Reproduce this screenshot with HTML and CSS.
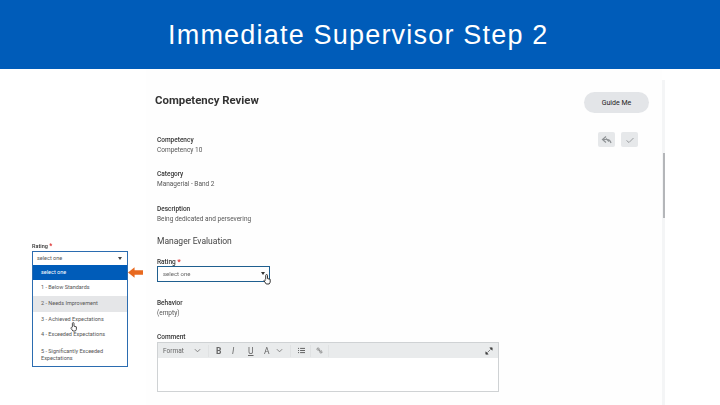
FILE: index.html
```html
<!DOCTYPE html>
<html lang="en">
<head>
    <meta charset="UTF-8">
    <title>Immediate Supervisor Step 2</title>
    <link rel="stylesheet" href="styles.css">
</head>
<body>
    <header class="banner">
        <h1>Immediate Supervisor Step 2</h1>
    </header>
    <main class="slide">
        <div class="crop">
            <div class="crop-label">Rating <span class="req">*</span></div>
            <div class="crop-box">
                <div class="crop-select">select one <span class="caret"></span></div>
                <div class="opt opt-active">select one</div>
                <div class="opt">1 - Below Standards</div>
                <div class="opt opt-hover">2 - Needs Improvement</div>
                <div class="opt">3 - Achieved Expectations</div>
                <div class="opt">4 - Exceeded Expectations</div>
                <div class="opt opt-wrap">5 - Significantly Exceeded Expectations</div>
                <svg class="hand" viewBox="0 0 10 12"><path d="M3 6V1.5a1 1 0 0 1 2 0V5l3 .8V9l-1.2 2H3.6L1.2 7.6C1 6.6 2 6 3 7" fill="#fff" stroke="#222" stroke-width="1"/></svg>
            </div>
        </div>
        <svg class="arrow" viewBox="0 0 16 11"><path d="M0 5.500 7 0V3.200H16V7.800H7V11Z" fill="#e8691f"/></svg>
        <section class="panel">
            <div class="panel-head">
                <h2>Competency Review</h2>
                <button class="guide">Guide Me</button>
            </div>
            <div class="actions">
                <span class="icon-btn"><svg viewBox="0 0 12 12"><path d="M5 2.500 1.500 5.500 5 8.500M1.500 5.500H6.500c2 0 3 1.500 3.500 3.500M5 4.500 8 7.500" fill="none" stroke="#8f9295" stroke-width="1.200"/></svg></span>
                <span class="icon-btn"><svg viewBox="0 0 12 12"><path d="M2.500 6.500 5 8.500l4.500-4.500" fill="none" stroke="#9a9da0" stroke-width="1"/></svg></span>
            </div>
            <div class="form">
                <div class="field field-first">
                    <div class="label">Competency</div>
                    <div class="value">Competency 10</div>
                </div>
                <div class="field">
                    <div class="label">Category</div>
                    <div class="value">Managerial - Band 2</div>
                </div>
                <div class="field">
                    <div class="label">Description</div>
                    <div class="value">Being dedicated and persevering</div>
                </div>
                <h3>Manager Evaluation</h3>
                <div class="label label-tight">Rating <span class="req">*</span></div>
                <div class="select">
                    select one
                    <span class="caret caret-dark"></span>
                    <svg class="pointer" viewBox="0 0 10 12"><path d="M3 6V1.500a1 1 0 0 1 2 0V5l3 .8V9l-1.200 2H3.600L1.200 7.600C1 6.600 2 6 3 7" fill="#fff" stroke="#222" stroke-width="1"/></svg>
                </div>
                <div class="field behavior">
                    <div class="label">Behavior</div>
                    <div class="value">(empty)</div>
                </div>
                <div class="label label-tight">Comment</div>
                <div class="editor">
                    <div class="toolbar">
                        <span class="format">Format</span>
                        <svg class="chev" viewBox="0 0 8 5"><path d="M1 1 4 4 7 1" fill="none" stroke="#777"/></svg>
                        <span class="sep"></span>
                        <b class="tool">B</b>
                        <i class="tool">I</i>
                        <u class="tool">U</u>
                        <span class="tool tool-a">A</span>
                        <svg class="chev" viewBox="0 0 8 5"><path d="M1 1 4 4 7 1" fill="none" stroke="#777"/></svg>
                        <span class="sep"></span>
                        <svg class="tool-svg" viewBox="0 0 10 10"><path d="M0 2H1.500M3 2H10M0 5H1.500M3 5H10M0 8H1.500M3 8H10" stroke="#555" stroke-width="1.300"/></svg>
                        <span class="sep sep-narrow"></span>
                        <svg class="tool-svg" viewBox="0 0 10 10"><path d="M1 3 3 1 5 3 3 5ZM5 7 7 5 9 7 7 9ZM3.500 3.500 6.500 6.500" fill="none" stroke="#666"/></svg>
                        <span class="sep sep-narrow"></span>
                        <svg class="expand" viewBox="0 0 10 10"><path d="M1 9V6L4 9ZM9 1V4L6 1ZM3 7 7 3" fill="#444" stroke="#444" stroke-width=".8"/></svg>
                    </div>
                    <div class="editor-body"></div>
                </div>
            </div>
        </section>
        <div class="scrollbar"><span class="thumb"></span></div>
    </main>
</body>
</html>
```

FILE: styles.css
```css
* {
    box-sizing: border-box;
}

body {
    margin: 0;
    width: 720px;
    height: 405px;
    overflow: hidden;
    background-color: #fff;
    font-family: Roboto, "Liberation Sans", sans-serif;
}

.banner {
    height: 69px;
    background-color: #005cb9;
    display: flex;
    align-items: center;
    padding: 1px 0 0 168px;
}

.banner h1 {
    margin: 0;
    color: #fff;
    font-family: "Liberation Sans", Arial, sans-serif;
    font-size: 27px;
    font-weight: normal;
    letter-spacing: 1.2px;
    white-space: nowrap;
}

.slide {
    display: flex;
    align-items: flex-start;
    height: 336px;
    overflow: hidden;
    padding-left: 32px;
}

/* zoomed copy of the dropdown on the left */
.crop {
    width: 96px;
    margin-top: 174px;
    font-size: 5.500px;
    color: #555;
    filter: blur(0.35px);
}

.crop-label {
    height: 8px;
    line-height: 6px;
    font-weight: 500;
    color: #333;
}

.req {
    color: #d33;
    font-weight: bold;
    font-size: 1.2em;
}

.crop-box {
    position: relative;
    border: 1px solid #2b6cb0;
    background-color: #fff;
    height: 116px;
}

.crop-select {
    height: 13px;
    line-height: 12px;
    padding-left: 4px;
    position: relative;
}

.caret {
    position: absolute;
    right: 5px;
    top: 5px;
    border-left: 2.500px solid transparent;
    border-right: 2.500px solid transparent;
    border-top: 3px solid #444;
}

.opt {
    height: 15.800px;
    line-height: 15.800px;
    padding-left: 8px;
    white-space: nowrap;
}

.opt-active {
    background-color: #005cb9;
    color: #fff;
    height: 15px;
    line-height: 15px;
}

.opt-hover {
    background-color: #e5e6e8;
}

.opt-wrap {
    height: 24px;
    line-height: 7px;
    padding: 5px 4px 0 8px;
    white-space: normal;
}

.hand {
    position: absolute;
    left: 37px;
    top: 70px;
    width: 8px;
    height: 10px;
}

.arrow {
    width: 15px;
    height: 11px;
    margin-top: 198px;
    flex: none;
}

.panel {
    width: 516px;
    height: 336px;
    margin-left: 3px;
    padding: 23px 13px 0 9px;
    flex: none;
    background-color: #fefefe;
    color: #333;
}

.panel-head {
    display: flex;
    align-items: center;
    justify-content: space-between;
    height: 21px;
}

.panel-head h2 {
    margin: -6px 0 0;
    font-size: 11.400px;
    font-weight: bold;
    color: #333;
    filter: blur(0.3px);
}

.guide {
    width: 65px;
    height: 21px;
    border: none;
    border-radius: 11px;
    background-color: #e3e5e8;
    font-family: inherit;
    font-size: 7px;
    font-weight: 400;
    color: #222;
    padding: 0;
}

.actions {
    display: flex;
    justify-content: flex-end;
    gap: 6px;
    height: 15px;
    margin-top: 19px;
    padding-right: 11px;
}

.icon-btn {
    width: 17px;
    height: 15px;
    background-color: #e6e8ea;
    border-radius: 2px;
    display: flex;
    align-items: center;
    justify-content: center;
}

.icon-btn svg {
    width: 12px;
    height: 12px;
}

.form {
    margin-left: 2px;
    margin-top: -11px;
    font-size: 6.500px;
    filter: blur(0.3px);
}

.field {
    height: 35px;
}

.field-first {
    height: 34px;
}

.label {
    height: 9px;
    line-height: 9px;
    font-weight: 500;
    color: #333;
}

.label-tight {
    height: 8px;
    line-height: 7px;
}

.value {
    height: 10px;
    line-height: 11px;
    color: #555;
}

.form h3 {
    margin: -5px 0 0;
    height: 23px;
    line-height: 13px;
    font-size: 8.500px;
    font-weight: normal;
    color: #444;
}

.select {
    position: relative;
    width: 113px;
    height: 16px;
    line-height: 14px;
    padding-left: 5px;
    border: 1px solid #1f5f8f;
    color: #666;
    font-size: 6px;
}

.caret-dark {
    right: 4px;
    top: 5px;
    border-top-color: #333;
}

.pointer {
    position: absolute;
    right: -3px;
    top: 7px;
    width: 9px;
    height: 11px;
}

.behavior {
    margin-top: 17px;
}

.editor {
    width: 342px;
    height: 50px;
    border: 1px solid #cfd2d4;
}

.toolbar {
    height: 15px;
    background-color: #e9ebec;
    display: flex;
    align-items: center;
    padding: 0 5px;
    color: #666;
}

.format {
    width: 31px;
    font-size: 6.500px;
}

.chev {
    width: 7px;
    height: 5px;
    flex: none;
}

.sep {
    width: 1px;
    height: 12px;
    background-color: #e0e2e3;
    margin: 0 7px;
}

.sep-narrow {
    margin: 0 5px;
}

.tool {
    width: 16px;
    font-size: 8.500px;
    color: #666;
}

.tool-a {
    width: 12px;
}

.tool-svg {
    width: 7px;
    height: 7px;
    flex: none;
}

.expand {
    width: 8px;
    height: 8px;
    margin-left: auto;
    flex: none;
}

.editor-body {
    height: 33px;
    background-color: #fff;
}

.scrollbar {
    width: 3px;
    height: 336px;
    background-color: #f4f5f6;
    margin-top: 11px;
    flex: none;
}

.thumb {
    display: block;
    width: 2px;
    height: 65px;
    margin: 73px 0 0 1px;
    background-color: #b4b6b9;
}
```
